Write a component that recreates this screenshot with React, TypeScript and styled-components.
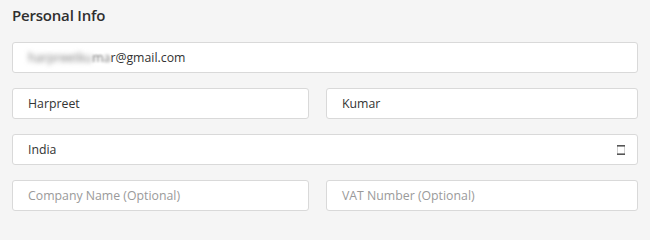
import React from 'react';
import styled, { createGlobalStyle } from 'styled-components';

const GlobalStyle = createGlobalStyle`
  html, body {
    margin: 0;
    padding: 0;
    background: #f5f5f5;
  }
  * {
    box-sizing: border-box;
  }
`;

const Panel = styled.div`
  width: 650px;
  height: 222px;
  padding: 6px 12px 0 12px;
  font-family: 'Open Sans', 'Noto Sans', sans-serif;
  color: #333;
`;

const Title = styled.h3`
  margin: 0 0 18px 0;
  height: 18px;
  font-size: 15px;
  font-weight: 600;
  line-height: 18px;
  letter-spacing: -0.2px;
  color: #2f2f2f;
`;

const Form = styled.div`
  display: grid;
  grid-template-columns: 297px 1fr;
  column-gap: 17px;
  row-gap: 15px;
  width: 626px;
`;

const Field = styled.div<{ $wide?: boolean; $placeholder?: boolean }>`
  grid-column: ${(props) => (props.$wide ? '1 / -1' : 'auto')};
  height: 31px;
  display: flex;
  align-items: center;
  justify-content: space-between;
  padding: 0 12px 0 15px;
  background: #fff;
  border: 1px solid #d9d9d9;
  border-radius: 3px;
  font-size: 12.3px;
  color: ${(props) => (props.$placeholder ? '#9a9a9a' : '#333')};
`;

const Blurred = styled.span<{ $amount?: number }>`
  filter: blur(${(props) => props.$amount ?? 2.5}px);
  color: #777;
`;

const SelectArrow = () => (
  <svg width="8" height="10" viewBox="0 0 8 10">
    <rect x="0.5" y="0.5" width="7" height="9" fill="none" stroke="#d0d0d0" />
    <line x1="0" y1="0.8" x2="8" y2="0.8" stroke="#555" strokeWidth="1.6" />
    <line x1="0" y1="9.2" x2="8" y2="9.2" stroke="#555" strokeWidth="1.6" />
  </svg>
);

export default function App() {
  return (
    <>
      <GlobalStyle />
      <Panel>
        <Title>Personal Info</Title>
        <Form>
          <Field $wide>
            <span>
              <Blurred>harpreetku</Blurred>
              <Blurred $amount={0.8}>m</Blurred>
              <Blurred $amount={1.5}>a</Blurred>r@gmail.com
            </span>
          </Field>
          <Field>Harpreet</Field>
          <Field>Kumar</Field>
          <Field $wide>
            <span>India</span>
            <SelectArrow />
          </Field>
          <Field $placeholder>Company Name (Optional)</Field>
          <Field $placeholder>VAT Number (Optional)</Field>
        </Form>
      </Panel>
    </>
  );
}
